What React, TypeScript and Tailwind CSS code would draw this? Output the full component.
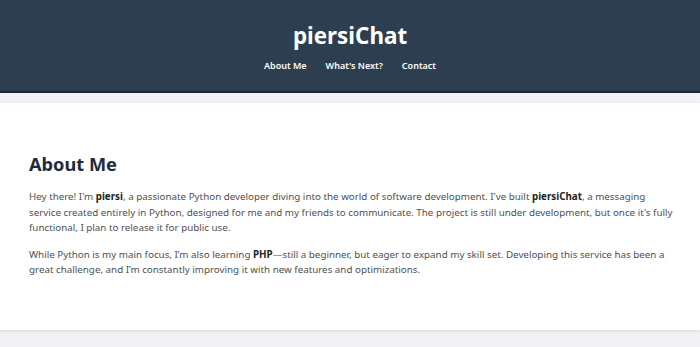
import React from 'react';

const App: React.FC = () => {
  return (
    <div className="min-h-screen bg-[#f3f3f7]" style={{ fontFamily: '"Noto Sans", "Open Sans", sans-serif' }}>
      {/* Header */}
      <header className="h-[93px] bg-[#2c3e50] border-b-2 border-[#1b2836] flex flex-col items-center pt-[21px]">
        <h1 className="text-[22.4px] leading-[30px] font-bold text-white">piersiChat</h1>
        <nav className="mt-[8px] flex gap-[19px] text-[9px] leading-[14px] font-semibold text-white">
          <a>About Me</a>
          <a>What's Next?</a>
          <a>Contact</a>
        </nav>
      </header>

      {/* Content */}
      <main className="mt-[10px] bg-white shadow-[0_1px_4px_rgba(0,0,0,0.12)] h-[227px] pl-[29px] pr-[21px] pt-[48px]">
        <h2 className="text-[18.2px] leading-[26px] font-bold text-[#1e2b3c]">About Me</h2>
        <p className="mt-[12px] text-[9.8px] leading-[15.5px] text-[#505050]">
          Hey there! I'm <strong className="font-bold text-[#222]">piersi</strong>, a passionate Python developer diving into the world of software development. I've built <strong className="font-bold text-[#222]">piersiChat</strong>, a messaging service created entirely in Python, designed for me and my friends to communicate. The project is still under development, but once it's fully functional, I plan to release it for public use.
        </p>
        <p className="mt-[11px] text-[9.8px] leading-[15.5px] text-[#505050]">
          While Python is my main focus, I’m also learning <strong className="font-bold text-[#222]">PHP</strong>—still a beginner, but eager to expand my skill set. Developing this service has been a great challenge, and I’m constantly improving it with new features and optimizations.
        </p>
      </main>
    </div>
  );
};

export default App;
